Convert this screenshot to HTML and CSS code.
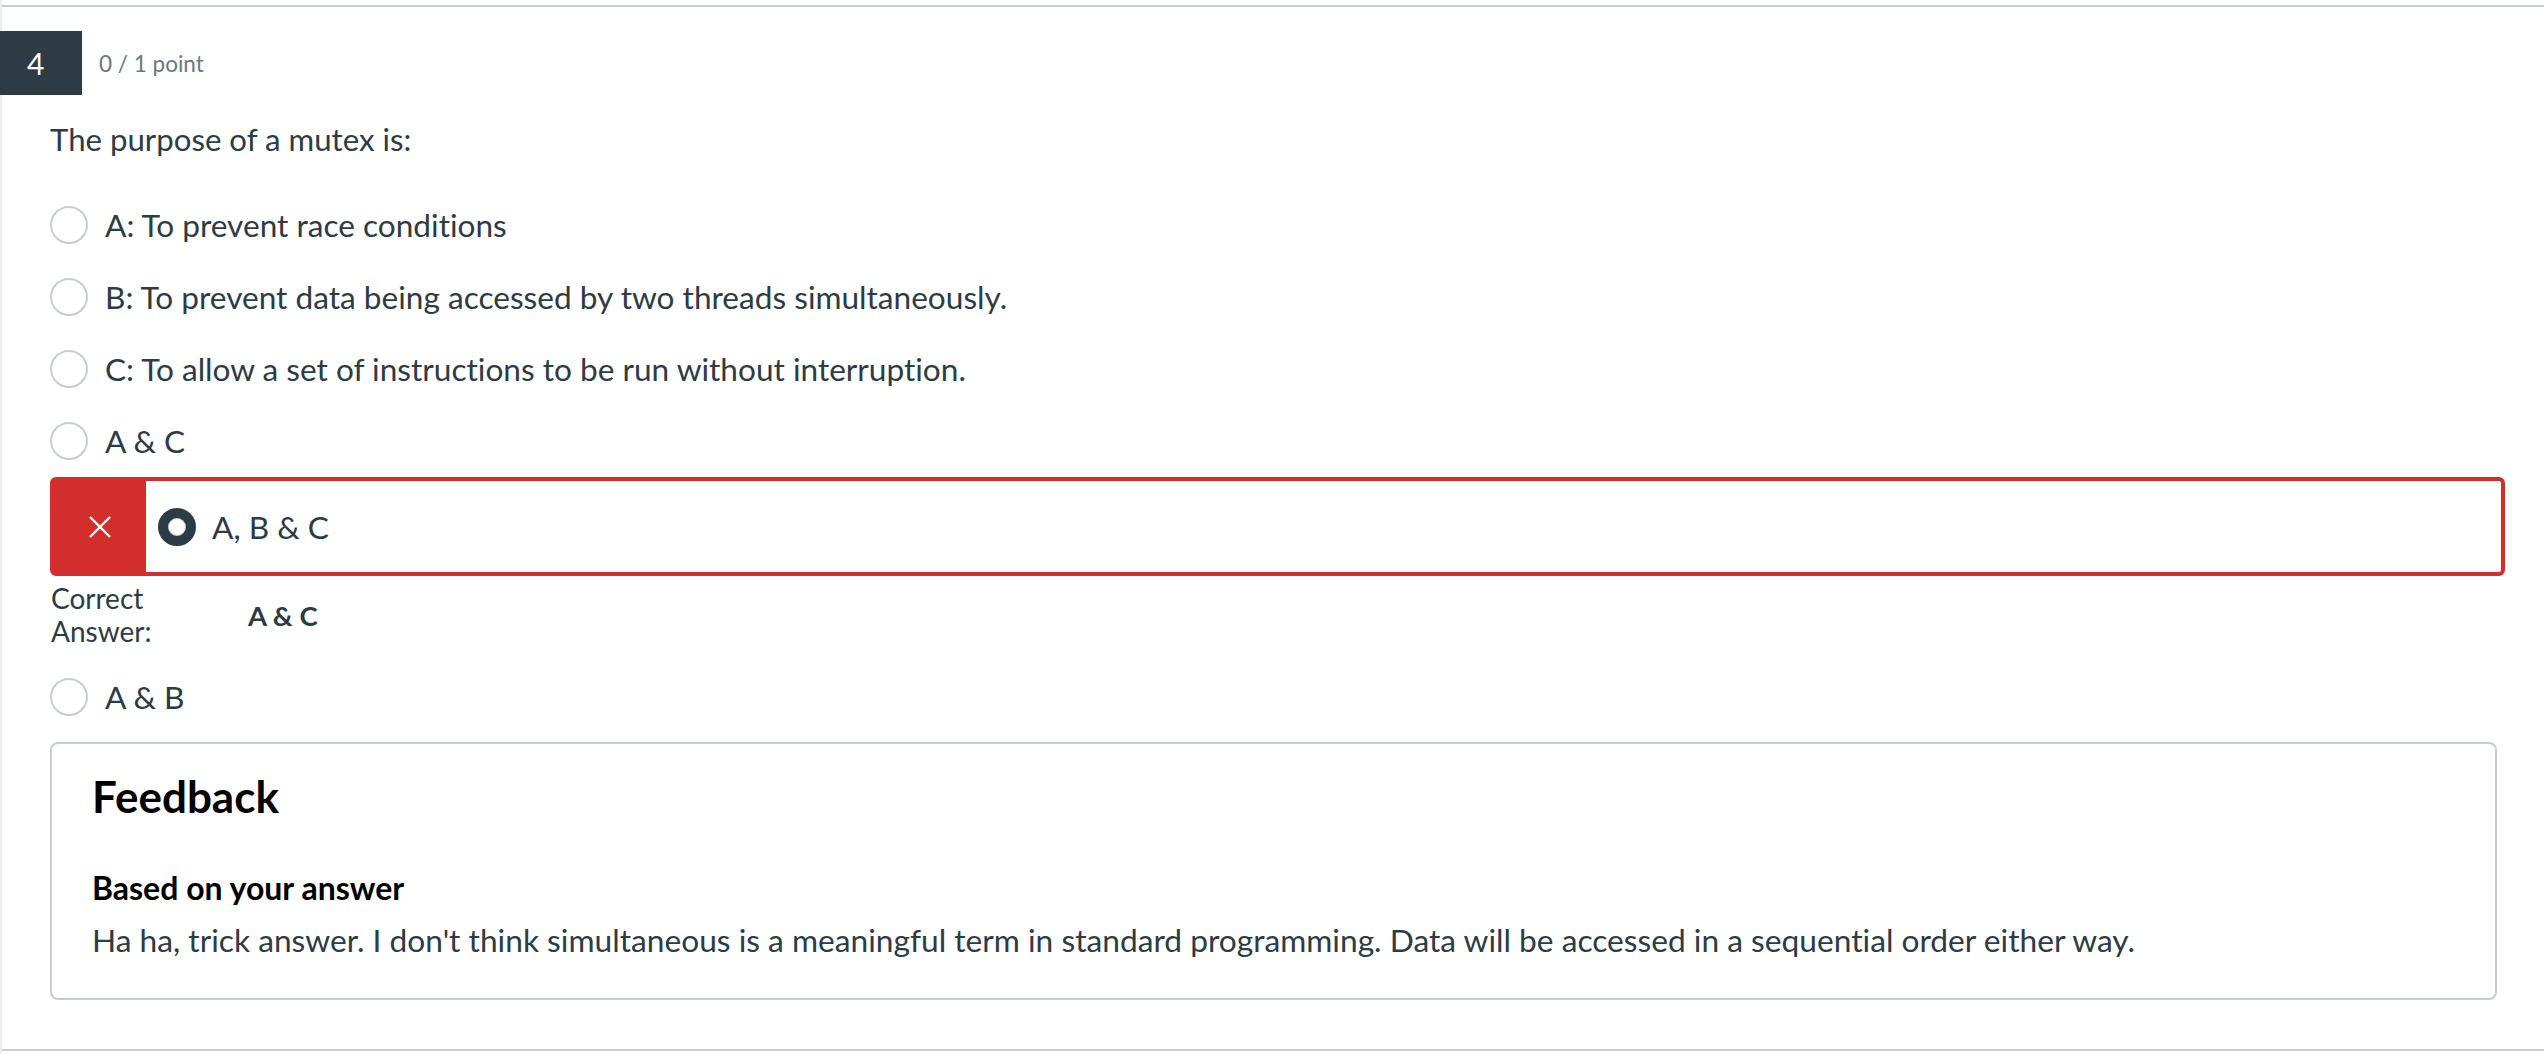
FILE: index.html
```html
<!DOCTYPE html>
<html lang="en">
<head>
<meta charset="utf-8">
<title>Quiz question 4</title>
<link rel="stylesheet" href="styles.css">
</head>
<body>
<div class="page">
  <section class="card">
    <header class="q-header">
      <div class="q-number">4</div>
      <div class="q-points">0 / 1 point</div>
    </header>
    <div class="q-body">
      <p class="q-text">The purpose of a mutex is:</p>
      <ul class="options">
        <li class="option"><span class="radio"></span><span class="opt-label">A: To prevent race conditions</span></li>
        <li class="option"><span class="radio"></span><span class="opt-label">B: To prevent data being accessed by two threads simultaneously.</span></li>
        <li class="option"><span class="radio"></span><span class="opt-label">C: To allow a set of instructions to be run without interruption.</span></li>
        <li class="option"><span class="radio"></span><span class="opt-label">A &amp; C</span></li>
        <li class="option option-wrong">
          <span class="wrong-flag">
            <svg width="22" height="22" viewBox="0 0 22 22" aria-hidden="true"><path d="M1 1 L21 21 M21 1 L1 21" stroke="#ffffff" stroke-width="2.4" stroke-linecap="butt" fill="none"/></svg>
          </span>
          <span class="radio radio-checked"></span><span class="opt-label">A, B &amp; C</span>
        </li>
        <li class="correct-answer">
          <span class="ca-label">Correct<br>Answer:</span>
          <span class="ca-value">A &amp; C</span>
        </li>
        <li class="option"><span class="radio"></span><span class="opt-label">A &amp; B</span></li>
      </ul>
      <div class="feedback">
        <h2 class="fb-title">Feedback</h2>
        <h3 class="fb-sub">Based on your answer</h3>
        <p class="fb-text">Ha ha, trick answer. I don't think simultaneous is a meaningful term in standard programming. Data will be accessed in a sequential order either way.</p>
      </div>
    </div>
  </section>
</div>
</body>
</html>
```

FILE: styles.css
```css
* { box-sizing: border-box; }

html, body {
  margin: 0;
  padding: 0;
  background: #ffffff;
}

body {
  font-family: Lato, "Open Sans", "Liberation Sans", sans-serif;
  font-variant-ligatures: none;
  color: #2d3b45;
}

.page {
  border-left: 2px solid #ebedee;
  min-height: 1054px;
  padding-top: 5px;
}

.card {
  border-top: 2px solid #c7cdd1;
  border-bottom: 2px solid #c7cdd1;
  padding-top: 24px;
  padding-bottom: 49px;
}

.q-header {
  display: flex;
  align-items: center;
  height: 64px;
}

.q-number {
  width: 82px;
  height: 64px;
  margin-left: -2px;
  background: #2d3b45;
  color: #ffffff;
  font-size: 30px;
  line-height: 64px;
  padding-left: 27px;
}

.q-points {
  margin-left: 17px;
  font-size: 22.5px;
  color: #6b7780;
}

.q-body {
  padding: 0 39px 0 48px;
}

.q-text {
  margin: 0;
  padding: 22px 0 28px;
  font-size: 31.2px;
  line-height: 44px;
}

.options {
  list-style: none;
  margin: 0;
  padding: 0;
}

.option {
  display: flex;
  align-items: center;
  height: 72px;
  font-size: 31.6px;
}

.radio {
  flex: none;
  width: 38px;
  height: 38px;
  border-radius: 50%;
  border: 2px solid #c7cdd1;
  background: #ffffff;
  margin-right: 17px;
}

.option-wrong {
  height: 99px;
  border: 4px solid #d22e2e;
  border-radius: 6px;
}

.wrong-flag {
  align-self: stretch;
  width: 92px;
  background: #d22e2e;
  display: flex;
  align-items: center;
  justify-content: center;
  margin-right: 12px;
}

.radio-checked {
  border: 10px solid #2d3b45;
  box-shadow: inset 0 0 0 1px #c7cdd1;
  margin-right: 16px;
}

.correct-answer {
  display: flex;
  align-items: center;
  padding: 6px 0 13px 1px;
  height: 85px;
}

.ca-label {
  width: 197px;
  font-size: 28px;
  line-height: 33px;
}

.ca-value {
  font-size: 27.5px;
  font-weight: 700;
}

.feedback {
  margin: 9px 8px 0 0;
  border: 2px solid #c7cdd1;
  border-radius: 8px;
  padding: 28px 40px 36px;
}

.fb-title {
  margin: 0;
  font-size: 44px;
  line-height: 48px;
  font-weight: 700;
  color: #000000;
}

.fb-sub {
  margin: 48px 0 0;
  font-size: 32px;
  line-height: 40px;
  font-weight: 700;
  color: #000000;
}

.fb-text {
  margin: 10px 0 0;
  font-size: 31.7px;
  line-height: 44px;
}
```
